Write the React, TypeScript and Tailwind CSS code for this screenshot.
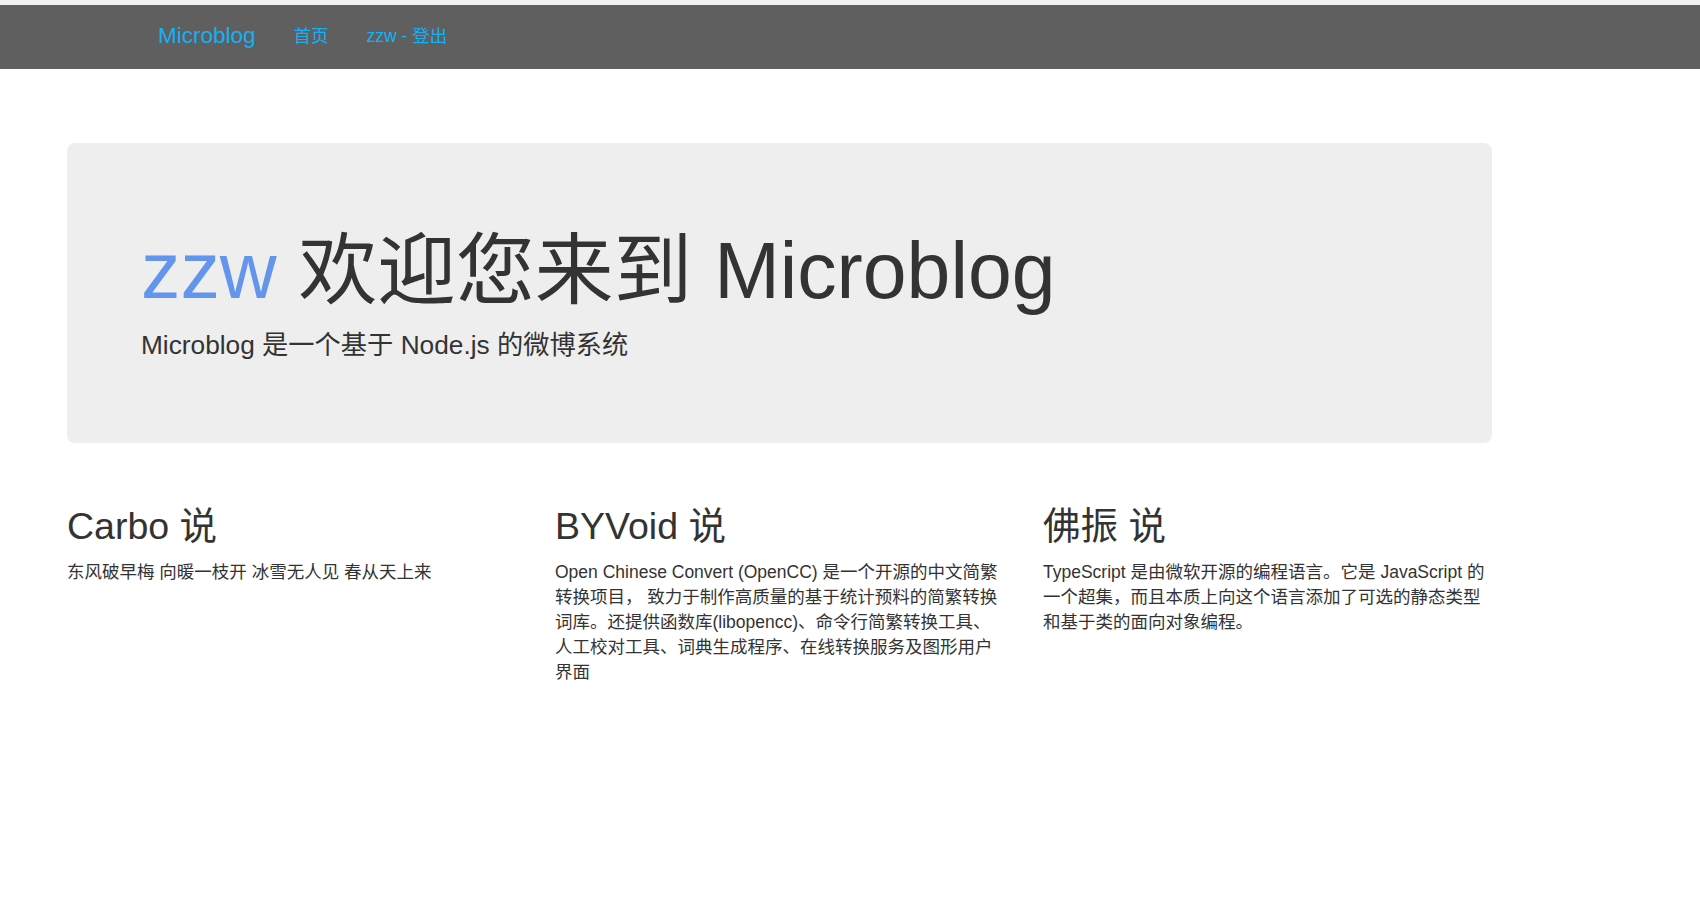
import React from 'react';

const FONT = '"Liberation Sans", Arial, "Noto Sans CJK SC", sans-serif';

const posts = [
  {
    author: 'Carbo',
    lines: ['东风破早梅 向暖一枝开 冰雪无人见 春从天上来'],
  },
  {
    author: 'BYVoid',
    lines: [
      'Open Chinese Convert (OpenCC) 是一个开源的中文简繁',
      '转换项目， 致力于制作高质量的基于统计预料的简繁转换',
      '词库。还提供函数库(libopencc)、命令行简繁转换工具、',
      '人工校对工具、词典生成程序、在线转换服务及图形用户',
      '界面',
    ],
  },
  {
    author: '佛振',
    lines: [
      'TypeScript 是由微软开源的编程语言。它是 JavaScript 的',
      '一个超集，而且本质上向这个语言添加了可选的静态类型',
      '和基于类的面向对象编程。',
    ],
  },
];

export default function App() {
  return (
    <div className="min-h-[916px] bg-white text-[#333333]" style={{ fontFamily: FONT }}>
      <div className="h-[5px] bg-[#f1f1f1]" />

      {/* navbar */}
      <nav className="h-[64px] bg-[#5f5f5f] flex items-center pl-[139px] pb-[2px]">
        <a href="#" className="px-[19px] text-[22.5px] leading-[62px] text-[#14b0f5]">Microblog</a>
        <a href="#" className="px-[19px] text-[17.5px] leading-[62px] text-[#14b0f5]">首页</a>
        <a href="#" className="px-[19px] text-[17.5px] leading-[62px] text-[#14b0f5]">zzw - 登出</a>
      </nav>

      <main className="ml-[67px] w-[1425px] mt-[74px]">
        <div className="bg-[#eeeeee] rounded-[8px] pl-[74px] pr-[76px] py-[60px]">
          <h1 className="mt-[25px] mb-[12.5px] text-[78.75px] leading-[1.1] font-normal whitespace-nowrap">
            <span className="text-[#6495ed]">zzw</span> 欢迎您来到 Microblog
          </h1>
          <p className="mb-[18.75px] text-[26.25px] leading-[37.5px]">
            Microblog 是一个基于 Node.js 的微博系统
          </p>
        </div>

        <div className="mt-[37.5px] grid grid-cols-[450px_450px_450px] gap-x-[38px]">
          {posts.map(post => (
            <div key={post.author}>
              <h2 className="mt-[25px] mb-[12.5px] text-[37.5px] leading-[1.1] font-normal">{post.author} 说</h2>
              <p className="text-[17.5px] leading-[25px] whitespace-nowrap">
                {post.lines.map((line, i) => (
                  <React.Fragment key={i}>
                    {line}
                    {i < post.lines.length - 1 && <br />}
                  </React.Fragment>
                ))}
              </p>
            </div>
          ))}
        </div>
      </main>
    </div>
  );
}
